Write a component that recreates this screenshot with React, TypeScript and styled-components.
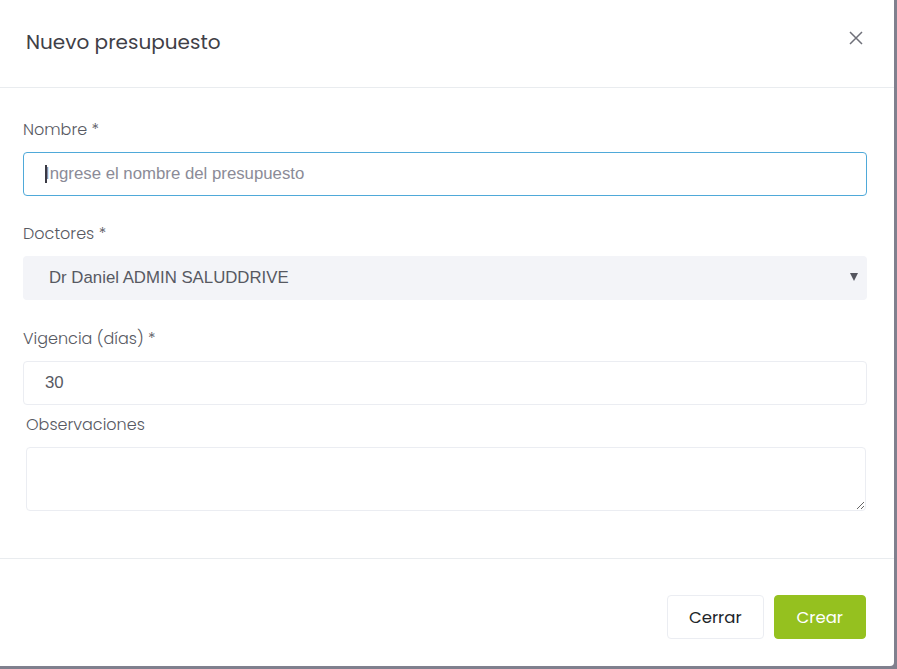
import React, { useState } from "react";
import styled, { createGlobalStyle } from "styled-components";

const GlobalStyle = createGlobalStyle`
  html, body {
    margin: 0;
    padding: 0;
    background: #80808e;
  }
  * {
    box-sizing: border-box;
  }
`;

const Modal = styled.div`
  width: 894px;
  height: 666px;
  background: #fff;
  border-radius: 0 0 4px 0;
  display: flex;
  flex-direction: column;
  font-family: Poppins, "Open Sans", sans-serif;
`;

const Header = styled.div`
  height: 88px;
  border-bottom: 1px solid #e9ecef;
  display: flex;
  align-items: center;
  justify-content: space-between;
  padding: 0 29px 4px 26px;
`;

const Title = styled.h5`
  margin: 0;
  font-size: 20px;
  font-weight: 400;
  color: #3f4047;
`;

const CloseButton = styled.button`
  border: none;
  background: none;
  padding: 0;
  width: 18px;
  height: 18px;
  cursor: pointer;
  display: flex;
  align-items: center;
  justify-content: center;
  margin-top: -8px;
`;

const Body = styled.div`
  padding: 31px 28px 0 23px;
  display: flex;
  flex-direction: column;
  height: 471px;
  border-bottom: 1px solid #e9ecef;
`;

const Field = styled.div<{ $indent?: number; $gap?: number }>`
  display: flex;
  flex-direction: column;
  padding-left: ${({ $indent }) => $indent || 0}px;
  margin-bottom: ${({ $gap }) => ($gap === undefined ? 27 : $gap)}px;
`;

const Label = styled.label`
  font-size: 16px;
  font-weight: 300;
  color: #575962;
  line-height: 22px;
  margin-bottom: 11px;
`;

const TextInput = styled.input<{ $focused?: boolean }>`
  height: 44px;
  width: calc(100% + 1px);
  border: 1px solid ${({ $focused }) => ($focused ? "#4fa9d9" : "#ebedf2")};
  border-radius: 4px;
  padding: 0 21px;
  font-family: "Liberation Sans", Arial, sans-serif;
  font-size: 16.8px;
  color: #575962;
  outline: none;
  background: #fff;

  &::placeholder {
    color: #8b8b97;
  }
`;

const Caret = styled.span`
  position: absolute;
  left: 22px;
  top: 13px;
  width: 2px;
  height: 18px;
  background: #3a3a44;
`;

const InputWrap = styled.div`
  position: relative;
`;

const SelectBox = styled.div`
  height: 44px;
  width: calc(100% + 1px);
  border-radius: 4px;
  background: #f3f4f8;
  display: flex;
  align-items: center;
  justify-content: space-between;
  padding: 0 9px 0 26px;
  font-family: "Liberation Sans", Arial, sans-serif;
  font-size: 16.8px;
  color: #575962;
`;

const Arrow = styled.span`
  width: 0;
  height: 0;
  border-left: 4px solid transparent;
  border-right: 4px solid transparent;
  border-top: 8px solid #55565f;
  margin-top: -2px;
`;

const TextArea = styled.textarea`
  height: 64px;
  width: 100%;
  border: 1px solid #ebedf2;
  border-radius: 4px;
  resize: vertical;
  outline: none;
  font-family: "Liberation Sans", Arial, sans-serif;
  font-size: 16px;
`;

const Footer = styled.div`
  flex: 1;
  display: flex;
  justify-content: flex-end;
  align-items: flex-start;
  gap: 10px;
  padding: 36px 28px 0 0;
`;

const Button = styled.button<{ $primary?: boolean }>`
  height: 44px;
  padding: 0 ${({ $primary }) => ($primary ? 22 : 21)}px;
  border-radius: 4px;
  font-family: Poppins, "Open Sans", sans-serif;
  font-size: 16.5px;
  cursor: pointer;
  border: 1px solid ${({ $primary }) => ($primary ? "#95c11f" : "#ebedf2")};
  background: ${({ $primary }) => ($primary ? "#95c11f" : "#fff")};
  color: ${({ $primary }) => ($primary ? "#fff" : "#212529")};
`;

export default function App() {
  const [nombre, setNombre] = useState("");
  const [vigencia, setVigencia] = useState("30");
  const [obs, setObs] = useState("");

  return (
    <>
      <GlobalStyle />
      <Modal>
        <Header>
          <Title>Nuevo presupuesto</Title>
          <CloseButton aria-label="Cerrar">
            <svg width="14" height="14" viewBox="0 0 14 14">
              <path d="M1 1 L13 13 M13 1 L1 13" stroke="#6f7079" strokeWidth="1.5" />
            </svg>
          </CloseButton>
        </Header>
        <Body>
          <Field>
            <Label>Nombre *</Label>
            <InputWrap>
              <TextInput
                $focused
                placeholder="Ingrese el nombre del presupuesto"
                value={nombre}
                onChange={(e) => setNombre(e.target.value)}
              />
              {!nombre && <Caret />}
            </InputWrap>
          </Field>
          <Field $gap={28}>
            <Label>Doctores *</Label>
            <SelectBox>
              <span>Dr Daniel ADMIN SALUDDRIVE</span>
              <Arrow />
            </SelectBox>
          </Field>
          <Field $gap={9}>
            <Label>Vigencia (días) *</Label>
            <TextInput value={vigencia} onChange={(e) => setVigencia(e.target.value)} />
          </Field>
          <Field $indent={3} $gap={0}>
            <Label>Observaciones</Label>
            <TextArea value={obs} onChange={(e) => setObs(e.target.value)} />
          </Field>
        </Body>
        <Footer>
          <Button>Cerrar</Button>
          <Button $primary>Crear</Button>
        </Footer>
      </Modal>
    </>
  );
}
